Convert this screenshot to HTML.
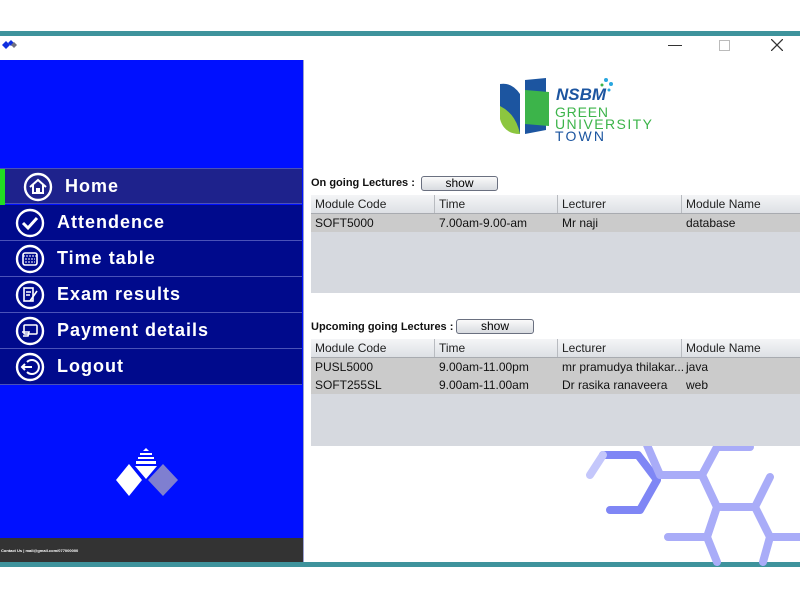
<!DOCTYPE html>
<html><head><meta charset="utf-8">
<style>
*{margin:0;padding:0;box-sizing:border-box}
body{width:800px;height:600px;background:#fff;position:relative;overflow:hidden;font-family:"Liberation Sans",Arial,sans-serif}
.a{position:absolute}
.side{left:0;top:60px;width:303px;height:478px;background:#0010ff}
.item{position:absolute;left:0;width:302px;height:36px;background:#000a8c;border-bottom:1px solid #4a52b8;color:#fff;font-weight:bold;font-size:18px;letter-spacing:1px;line-height:35px;padding-left:57px}
.item svg{position:absolute;left:15px;top:3px}
.hdr{background:linear-gradient(#f4f5f7,#dde0e5);border-bottom:1px solid #a8abb0;height:19px;font-size:12px;color:#222}
.hdr div,.row div{position:absolute;top:0;padding-left:4px;line-height:18px}
.hdr div{border-left:1px solid #b8bbc0}
.row{background:#cbcbcb;height:18px;font-size:12px;color:#111}
.btn{border:1px solid #6a7080;border-radius:3px;background:linear-gradient(#fafafa,#d8dbe0);font-size:12px;text-align:center;line-height:13px;height:15px}
.lbl{font-size:11px;font-weight:bold;color:#111}
</style></head><body>
<div class="a" style="left:0;top:31px;width:800px;height:5px;background:#3e939c"></div>
<div class="a" style="left:0;top:562px;width:800px;height:5px;background:#3e939c"></div>
<svg class="a" style="left:1px;top:39px" width="17" height="12"><path d="M1 6 L5 2 L9 6 L5 10Z" fill="#1030e0"/><path d="M7 4 L10 1 L13 4 L10 7Z" fill="#1030e0"/><path d="M10 6 L13 3 L16 6 L13 9Z" fill="#707080"/></svg>
<div class="a" style="left:668px;top:45px;width:14px;height:1px;background:#333"></div>
<div class="a" style="left:719px;top:40px;width:11px;height:11px;border:1px solid #bbb"></div>
<svg class="a" style="left:771px;top:39px" width="12" height="12"><path d="M0 0L12 12M12 0L0 12" stroke="#333" stroke-width="1.3"/></svg>

<div class="a side"></div>
<div class="item" style="top:168px;background:#1e228c;padding-left:65px;border-top:1px solid #4a52b8"><div class="a" style="left:0;top:0;width:5px;height:36px;background:#22dd22"></div><svg style="left:23px" width="30" height="30" viewBox="0 0 30 30"><circle cx="15" cy="15" r="13" fill="none" stroke="#fff" stroke-width="2.4"/><path d="M7 15 L15 8 L23 15 M10 13 V21 H20 V13" fill="none" stroke="#fff" stroke-width="2"/><rect x="13" y="16" width="4" height="5" fill="#fff"/></svg>Home</div>
<div class="item" style="top:205px"><svg width="30" height="30" viewBox="0 0 30 30"><circle cx="15" cy="15" r="13" fill="none" stroke="#fff" stroke-width="2.4"/><path d="M8 15 L13 20 L22 10" fill="none" stroke="#fff" stroke-width="3"/></svg>Attendence</div>
<div class="item" style="top:241px"><svg width="30" height="30" viewBox="0 0 30 30"><circle cx="15" cy="15" r="13" fill="none" stroke="#fff" stroke-width="2.4"/><rect x="8" y="9" width="14" height="12" rx="2" fill="none" stroke="#fff" stroke-width="1.6"/><path d="M8 12H22M10 15H20M10 18H20" stroke="#fff" stroke-dasharray="2 1"/></svg>Time table</div>
<div class="item" style="top:277px"><svg width="30" height="30" viewBox="0 0 30 30"><circle cx="15" cy="15" r="13" fill="none" stroke="#fff" stroke-width="2.4"/><rect x="9" y="8" width="9" height="13" fill="none" stroke="#fff" stroke-width="1.6"/><path d="M11 12H16M11 15H15M15 21 L22 11" stroke="#fff" stroke-width="1.6"/></svg>Exam results</div>
<div class="item" style="top:313px"><svg width="30" height="30" viewBox="0 0 30 30"><circle cx="15" cy="15" r="13" fill="none" stroke="#fff" stroke-width="2.4"/><rect x="9" y="9" width="13" height="9" rx="1" fill="none" stroke="#fff" stroke-width="1.6"/><path d="M7 16 H14 L13 20 H8" fill="none" stroke="#fff" stroke-width="1.6"/></svg>Payment details</div>
<div class="item" style="top:349px"><svg width="30" height="30" viewBox="0 0 30 30"><circle cx="15" cy="15" r="13" fill="none" stroke="#fff" stroke-width="2.4"/><path d="M12 10 A7 7 0 1 1 12 20" fill="none" stroke="#fff" stroke-width="2"/><path d="M7 15H17M10 12L7 15L10 18" fill="none" stroke="#fff" stroke-width="2"/></svg>Logout</div>
<svg class="a" style="left:116px;top:448px" width="62" height="48" viewBox="0 0 62 48"><path d="M30 0 L33 3 H27Z" fill="#fff"/><rect x="24" y="5" width="12" height="2" fill="#fff"/><rect x="22" y="9" width="16" height="2" fill="#fff"/><rect x="20" y="13" width="20" height="3" fill="#fff"/><path d="M19 18 H41 L30 31Z" fill="#fff"/><path d="M0 32 L13 16 L26 32 L13 48Z" fill="#fff"/><path d="M32 32 L47 16 L62 32 L47 48Z" fill="#7f7fd0"/></svg>
<div class="a" style="left:0;top:538px;width:303px;height:24px;background:#333"></div>
<div class="a" style="left:1px;top:548px;font-size:4px;color:#fff;font-weight:bold">Contact Us | mail@gmail.com/077000000</div>
<div class="a" style="left:303px;top:60px;width:1px;height:502px;background:#9aa0d0"></div>

<svg class="a" style="left:498px;top:74px" width="160" height="72" viewBox="0 0 160 72">
<path d="M2 10 Q14 8 22 20 L22 60 Q8 50 2 35Z" fill="#1c55a0"/>
<path d="M2 32 Q18 40 22 60 Q6 60 2 45Z" fill="#8cc63f"/>
<path d="M27 6 L48 4 L48 56 L27 60Z" fill="#1c55a0"/>
<path d="M27 16 L51 18 L51 52 L27 50Z" fill="#3cb44a"/>
<text x="58" y="26" font-family="Liberation Sans" font-weight="bold" font-style="italic" font-size="17" fill="#1c55a0">NSBM</text>
<text x="57" y="43" font-family="Liberation Sans" font-size="14" fill="#3cb44a" textLength="53" lengthAdjust="spacing">GREEN</text>
<text x="57" y="55" font-family="Liberation Sans" font-size="14" fill="#3cb44a" textLength="97" lengthAdjust="spacing">UNIVERSITY</text>
<text x="57" y="67" font-family="Liberation Sans" font-size="14" fill="#1c55a0" textLength="49" lengthAdjust="spacing">TOWN</text>
<circle cx="108" cy="6" r="2" fill="#2aa7df"/><circle cx="113" cy="10" r="2" fill="#2aa7df"/><circle cx="104" cy="11" r="1.5" fill="#3cb44a"/><circle cx="111" cy="16" r="1.5" fill="#2aa7df"/>
</svg>

<div class="a lbl" style="left:311px;top:177px">On going Lectures :</div>
<div class="a btn" style="left:421px;top:176px;width:77px">show</div>
<div class="a" style="left:311px;top:195px;width:489px;height:98px;background:#d6d9df"></div>
<div class="a hdr" style="left:311px;top:195px;width:489px"><div style="left:0;border:0">Module Code</div><div style="left:123px">Time</div><div style="left:246px">Lecturer</div><div style="left:370px">Module Name</div></div>
<div class="a row" style="left:311px;top:214px;width:489px"><div style="left:0">SOFT5000</div><div style="left:124px">7.00am-9.00-am</div><div style="left:247px">Mr naji</div><div style="left:371px">database</div></div>

<div class="a lbl" style="left:311px;top:321px">Upcoming going Lectures :</div>
<div class="a btn" style="left:456px;top:319px;width:78px">show</div>
<svg class="a" style="left:0;top:0" width="800" height="600"><g fill="none" stroke-width="8" stroke-linejoin="round" stroke-linecap="round">
<path d="M603 455 H638 L657 480 L640 510 H610" stroke="#7f86f5"/>
<path d="M603 455 L590 475" stroke="#c4c7fb"/>
<path d="M647 445 L660 475 H702 L717 447 H750 M702 475 L717 507 H755 L770 477 M717 507 L707 537 H668 M755 507 L770 537 H800 M707 537 L717 562 M770 537 L763 562" stroke="#a9acf8"/>
</g></svg>
<div class="a" style="left:311px;top:339px;width:489px;height:107px;background:#d6d9df"></div>
<div class="a hdr" style="left:311px;top:339px;width:489px"><div style="left:0;border:0">Module Code</div><div style="left:123px">Time</div><div style="left:246px">Lecturer</div><div style="left:370px">Module Name</div></div>
<div class="a row" style="left:311px;top:358px;width:489px"><div style="left:0">PUSL5000</div><div style="left:124px">9.00am-11.00pm</div><div style="left:247px">mr pramudya thilakar...</div><div style="left:371px">java</div></div>
<div class="a row" style="left:311px;top:376px;width:489px"><div style="left:0">SOFT255SL</div><div style="left:124px">9.00am-11.00am</div><div style="left:247px">Dr rasika ranaveera</div><div style="left:371px">web</div></div>
</body></html>
